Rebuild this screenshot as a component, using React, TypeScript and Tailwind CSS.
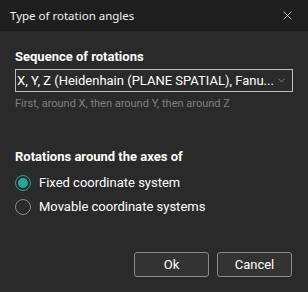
import { X, ChevronDown } from "lucide-react"

export default function App() {
  return (
    <div className="w-[308px] h-[292px] bg-[#2a2a2a] flex flex-col text-white" style={{ fontFamily: "Roboto, sans-serif" }}>
      {/* Title bar */}
      <div className="h-[31px] bg-[#1e1e1e] flex items-center justify-between pl-[10px] pr-[13px] shrink-0">
        <span className="text-[11.5px] text-[#f0f0f0]" style={{ fontFamily: "'Noto Sans', sans-serif" }}>
          Type of rotation angles
        </span>
        <X className="w-[15px] h-[15px] text-[#e0e0e0]" strokeWidth={1.2} />
      </div>

      {/* Body */}
      <div className="flex-1 flex flex-col px-[15px] pt-[15px]">
        <h2 className="text-[13px] font-bold leading-[22px]">Sequence of rotations</h2>
        <div className="mt-[1px] h-[23px] border border-[#bdbdbd] flex items-center pl-[1px] pr-[5px]">
          <span className="text-[13px] whitespace-nowrap">
            X, Y, Z (Heidenhain (PLANE SPATIAL), Fanu...
          </span>
          <ChevronDown className="ml-auto w-[11px] h-[11px] text-[#cfcfcf]" strokeWidth={1.2} />
        </div>
        <p className="mt-[4px] text-[11px] text-[#808080] leading-[16px]">
          First, around X, then around Y, then around Z
        </p>

        <h2 className="mt-[34px] text-[13px] font-bold leading-[22px]">Rotations around the axes of</h2>
        <div className="mt-[6px] flex flex-col gap-[6px]">
          <label className="flex items-center gap-[8px] h-[18px]">
            <span className="w-[16px] h-[16px] rounded-full border border-[#2aa198] flex items-center justify-center">
              <span className="w-[10px] h-[10px] rounded-full bg-[#26a69a]" />
            </span>
            <span className="text-[13px]">Fixed coordinate system</span>
          </label>
          <label className="flex items-center gap-[8px] h-[18px]">
            <span className="w-[16px] h-[16px] rounded-full border border-[#8a8a8a]" />
            <span className="text-[13px]">Movable coordinate systems</span>
          </label>
        </div>

        <div className="mt-auto mb-[15px] flex justify-end gap-[8px] pr-[1px]">
          <button className="w-[75px] h-[25px] rounded-[3px] border border-[#8a8a8a] bg-[#333333] text-[13px]">
            Ok
          </button>
          <button className="w-[75px] h-[25px] rounded-[3px] border border-[#8a8a8a] bg-[#333333] text-[13px]">
            Cancel
          </button>
        </div>
      </div>
    </div>
  )
}
